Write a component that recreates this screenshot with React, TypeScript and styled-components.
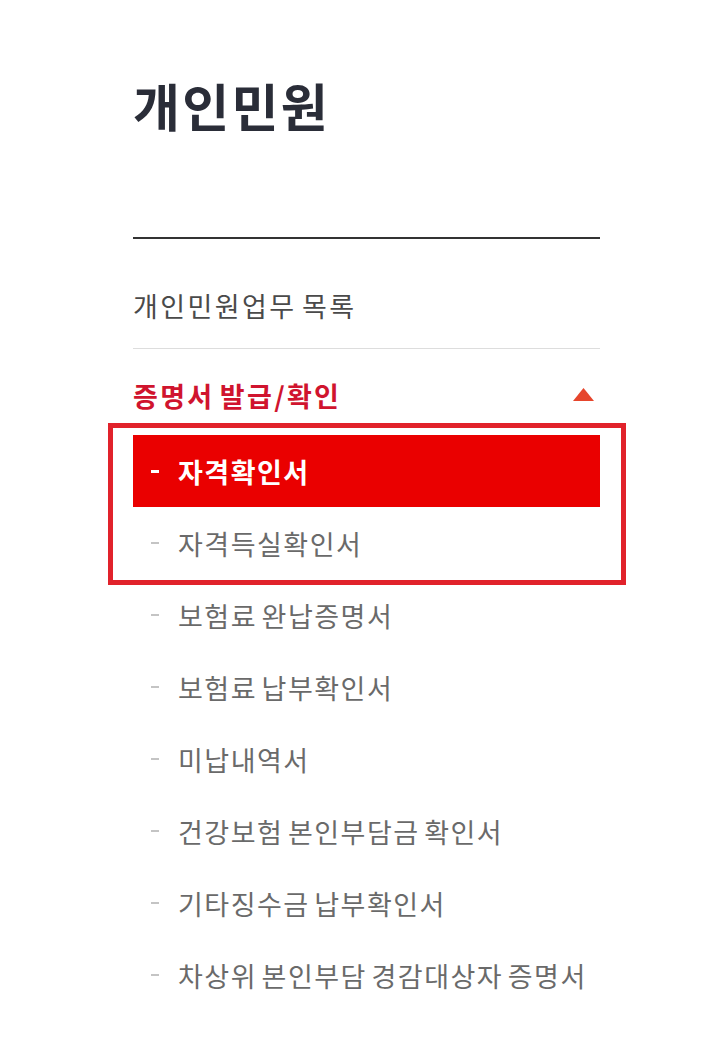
import styled, { createGlobalStyle } from "styled-components";

const GlobalStyle = createGlobalStyle`
  html, body {
    margin: 0;
    padding: 0;
    background: #fff;
  }
  body {
    font-family: "Noto Sans CJK KR", "Noto Sans", sans-serif;
  }
`;

const Page = styled.div`
  width: 714px;
  height: 1039px;
  padding: 70px 0 0 133px;
  box-sizing: border-box;
  background: #fff;
`;

const Side = styled.nav`
  width: 467px;
`;

const Title = styled.h2`
  margin: 0;
  font-size: 51px;
  line-height: 70px;
  font-weight: 700;
  color: #2a2d38;
  letter-spacing: 2.3px;
  padding-bottom: 97px;
  border-bottom: 2px solid #333;
`;

const TopLink = styled.div`
  padding: 50px 0 25px;
  font-size: 27px;
  line-height: 34px;
  color: #4a4a4a;
  letter-spacing: 2.4px;
  word-spacing: -3px;
  border-bottom: 1px solid #ddd;
`;

const GroupHead = styled.div`
  display: flex;
  align-items: center;
  justify-content: space-between;
  padding: 30px 6px 0 0;
  font-size: 27px;
  line-height: 34px;
  font-weight: 700;
  color: #d0142e;
  letter-spacing: 2.3px;
  word-spacing: -3px;

  & svg {
    margin-top: -4px;
  }
`;

const SubList = styled.ul`
  list-style: none;
  margin: 22px 0 0;
  padding: 0;
`;

const Marked = styled.div`
  position: relative;

  &::before {
    content: "";
    position: absolute;
    top: -12px;
    left: -25px;
    right: -26px;
    bottom: -6px;
    border: 5px solid #e1222b;
    pointer-events: none;
  }
`;

const Item = styled.li<{ $active?: boolean }>`
  display: flex;
  align-items: center;
  height: 72px;
  padding-left: 18px;
  font-size: 27px;
  letter-spacing: 1.5px;
  word-spacing: -3px;
  background: ${(p) => (p.$active ? "#ea0000" : "transparent")};
  color: ${(p) => (p.$active ? "#fff" : "#6a6a6a")};
  font-weight: ${(p) => (p.$active ? 700 : 400)};
`;

const Dash = styled.span<{ $active?: boolean }>`
  display: inline-block;
  width: 8px;
  height: ${(p) => (p.$active ? "3px" : "2px")};
  margin-right: 19px;
  background: ${(p) => (p.$active ? "#fff" : "#c4c4c4")};
`;

const items = [
  "보험료 완납증명서",
  "보험료 납부확인서",
  "미납내역서",
  "건강보험 본인부담금 확인서",
  "기타징수금 납부확인서",
  "차상위 본인부담 경감대상자 증명서",
];

export default function App() {
  return (
    <>
      <GlobalStyle />
      <Page>
        <Side>
          <Title>개인민원</Title>
          <TopLink>개인민원업무 목록</TopLink>
          <GroupHead>
            <span>증명서 발급/확인</span>
            <svg width="21" height="13" viewBox="0 0 21 13">
              <polygon points="10.5,0 21,13 0,13" fill="#e6452c" />
            </svg>
          </GroupHead>
          <SubList>
            <Marked>
              <Item $active>
                <Dash $active />
                자격확인서
              </Item>
              <Item>
                <Dash />
                자격득실확인서
              </Item>
            </Marked>
            {items.map((t) => (
              <Item key={t}>
                <Dash />
                {t}
              </Item>
            ))}
          </SubList>
        </Side>
      </Page>
    </>
  );
}
